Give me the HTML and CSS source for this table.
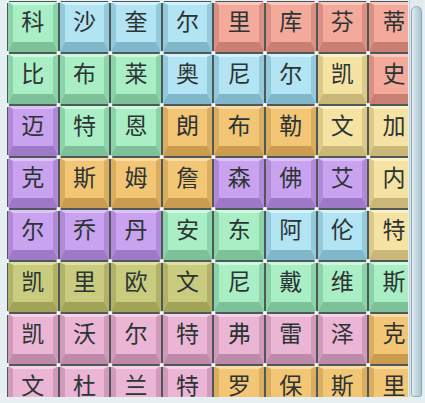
FILE: index.html
```html
<!DOCTYPE html>
<html lang="zh">
<head>
<meta charset="utf-8">
<title>字块</title>
<link rel="stylesheet" href="styles.css">
</head>
<body>
<div class="frame">
  <div class="view">
    <div class="grid">
      <div class="tile green"><span class="face">科</span></div>
      <div class="tile blue"><span class="face">沙</span></div>
      <div class="tile blue"><span class="face">奎</span></div>
      <div class="tile blue"><span class="face">尔</span></div>
      <div class="tile salmon"><span class="face">里</span></div>
      <div class="tile salmon"><span class="face">库</span></div>
      <div class="tile salmon"><span class="face">芬</span></div>
      <div class="tile salmon"><span class="face">蒂</span></div>

      <div class="tile green"><span class="face">比</span></div>
      <div class="tile green"><span class="face">布</span></div>
      <div class="tile green"><span class="face">莱</span></div>
      <div class="tile blue"><span class="face">奥</span></div>
      <div class="tile blue"><span class="face">尼</span></div>
      <div class="tile blue"><span class="face">尔</span></div>
      <div class="tile yellow"><span class="face">凯</span></div>
      <div class="tile salmon"><span class="face">史</span></div>

      <div class="tile purple"><span class="face">迈</span></div>
      <div class="tile green"><span class="face">特</span></div>
      <div class="tile green"><span class="face">恩</span></div>
      <div class="tile orange"><span class="face">朗</span></div>
      <div class="tile orange"><span class="face">布</span></div>
      <div class="tile orange"><span class="face">勒</span></div>
      <div class="tile yellow"><span class="face">文</span></div>
      <div class="tile yellow"><span class="face">加</span></div>

      <div class="tile purple"><span class="face">克</span></div>
      <div class="tile orange"><span class="face">斯</span></div>
      <div class="tile orange"><span class="face">姆</span></div>
      <div class="tile orange"><span class="face">詹</span></div>
      <div class="tile purple"><span class="face">森</span></div>
      <div class="tile purple"><span class="face">佛</span></div>
      <div class="tile purple"><span class="face">艾</span></div>
      <div class="tile yellow"><span class="face">内</span></div>

      <div class="tile purple"><span class="face">尔</span></div>
      <div class="tile purple"><span class="face">乔</span></div>
      <div class="tile purple"><span class="face">丹</span></div>
      <div class="tile green"><span class="face">安</span></div>
      <div class="tile green"><span class="face">东</span></div>
      <div class="tile blue"><span class="face">阿</span></div>
      <div class="tile blue"><span class="face">伦</span></div>
      <div class="tile yellow"><span class="face">特</span></div>

      <div class="tile olive"><span class="face">凯</span></div>
      <div class="tile olive"><span class="face">里</span></div>
      <div class="tile olive"><span class="face">欧</span></div>
      <div class="tile olive"><span class="face">文</span></div>
      <div class="tile green"><span class="face">尼</span></div>
      <div class="tile green"><span class="face">戴</span></div>
      <div class="tile green"><span class="face">维</span></div>
      <div class="tile green"><span class="face">斯</span></div>

      <div class="tile pink"><span class="face">凯</span></div>
      <div class="tile pink"><span class="face">沃</span></div>
      <div class="tile pink"><span class="face">尔</span></div>
      <div class="tile pink"><span class="face">特</span></div>
      <div class="tile pink"><span class="face">弗</span></div>
      <div class="tile pink"><span class="face">雷</span></div>
      <div class="tile pink"><span class="face">泽</span></div>
      <div class="tile orange"><span class="face">克</span></div>

      <div class="tile pink"><span class="face">文</span></div>
      <div class="tile pink"><span class="face">杜</span></div>
      <div class="tile pink"><span class="face">兰</span></div>
      <div class="tile pink"><span class="face">特</span></div>
      <div class="tile orange"><span class="face">罗</span></div>
      <div class="tile orange"><span class="face">保</span></div>
      <div class="tile orange"><span class="face">斯</span></div>
      <div class="tile orange"><span class="face">里</span></div>
    </div>
  </div>
  <div class="scrollbar"><div class="thumb"></div></div>
</div>
</body>
</html>
```

FILE: styles.css
```css
html, body {
  margin: 0;
  padding: 0;
  background: #f4f8f9;
}

.frame {
  display: flex;
  width: 425px;
  height: 403px;
  background: #e6eff2;
}

.view {
  width: 401px;
  height: 396px;
  margin: 1px 0 0 7px;
  overflow: hidden;
  position: relative;
}

.grid {
  display: grid;
  grid-template-columns: repeat(8, 51.6px);
  grid-auto-rows: 52px;
  position: relative;
}

.grid::after {
  content: "";
  position: absolute;
  inset: 0;
  pointer-events: none;
  background-image: radial-gradient(circle at center, #ffffff 1.4px, rgba(255,255,255,0.6) 2px, rgba(255,255,255,0) 2.6px);
  background-size: 51.6px 52px;
  background-position: -25.8px -26px;
}

.tile {
  box-sizing: border-box;
  padding: 1px;
  background: #4f5858;
}

.face {
  box-sizing: border-box;
  display: flex;
  align-items: center;
  justify-content: center;
  height: 100%;
  padding-bottom: 7px;
  border-style: solid;
  border-width: 3px 5px 10px 5px;
  font-family: "Noto Sans CJK SC", "Noto Sans CJK JP", sans-serif;
  font-size: 23px;
  line-height: 1;
  color: #2c3434;
}

.green .face  { background: #aaeec6; border-color: #cdf9de #8bd3a8 #7cc198 #8bd3a8; }
.blue .face   { background: #b3e4f3; border-color: #d5f2fb #92cadc #80b7ca #92cadc; }
.salmon .face { background: #f3aa9b; border-color: #fac8be #da9082 #c98073 #da9082; }
.yellow .face { background: #f5e3a3; border-color: #fbf1c8 #dcc987 #cab778 #dcc987; }
.purple .face { background: #c9a3ef; border-color: #ddc4f7 #b08ad9 #9e79c8 #b08ad9; }
.orange .face { background: #f3c676; border-color: #f9dca6 #daad5f #c99c50 #daad5f; }
.olive .face  { background: #c9cc7f; border-color: #dee0a6 #b0b367 #a0a358 #b0b367; }
.pink .face   { background: #ebb5d5; border-color: #f6d1e7 #d19abb #bf89aa #d19abb; }

.scrollbar {
  box-sizing: border-box;
  width: 14px;
  height: 397px;
  margin-left: 1px;
  padding: 6px 1px 2px 1px;
  background: #dfe9ee;
  border-left: 1px solid #c3d0d7;
}

.thumb {
  height: 100%;
  border: 1px solid #8ea8b6;
  border-radius: 6px 6px 3px 3px;
  background: linear-gradient(to right, #e4eef3 0%, #c9dbe4 40%, #a9c2cf 100%);
}
```
